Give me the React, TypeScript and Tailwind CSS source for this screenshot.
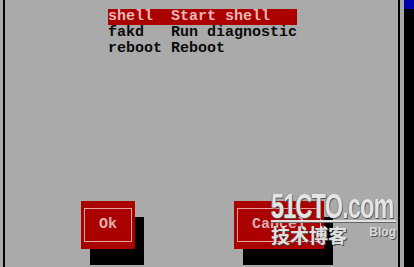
import React from 'react';

const items = [
  { tag: 'shell', label: 'Start shell', selected: true },
  { tag: 'fakd', label: 'Run diagnostic', selected: false },
  { tag: 'reboot', label: 'Reboot', selected: false },
];

const Button: React.FC<{ label: string; width: string }> = ({ label, width }) => (
  <div className={`${width} h-[48px] bg-[#aa0000] p-[3px] shadow-[9px_16px_0_0_#000]`}>
    <div className="flex h-[34px] mt-[4px] items-center justify-center border border-[#e8a4a4] text-[#dcb0b0]">
      {label}
    </div>
  </div>
);

export default function App() {
  return (
    <div
      className="relative flex h-[267px] w-[414px] overflow-hidden bg-[#aaaaaa] font-bold text-[15px] leading-[16px]"
      style={{ fontFamily: '"Liberation Mono", "DejaVu Sans Mono", monospace' }}
    >
      <div className="w-[3px] shrink-0" />
      <div className="w-[2px] shrink-0 bg-black" />
      <div className="flex flex-1 flex-col">
        <div className="pt-[9px] pl-[103px]">
          {items.map((it) => (
            <div
              key={it.tag}
              className={`flex h-[16px] w-[189px] whitespace-pre ${
                it.selected ? 'bg-[#aa0000] text-[#ecb8b8]' : 'text-[#0a0a0a]'
              }`}
            >
              <span className="w-[63px]">{it.tag}</span>
              <span>{it.label}</span>
            </div>
          ))}
        </div>
        <div className="mt-[144px] flex gap-[99px] pl-[76px]">
          <Button label="Ok" width="w-[54px]" />
          <Button label="Cancel" width="w-[90px]" />
        </div>
      </div>
      <div className="w-[2px] shrink-0 bg-black" />
      <div className="w-[4px] shrink-0" />
      <div className="flex w-[10px] shrink-0 flex-col bg-black">
        <div className="h-[9px] bg-[#0000aa]" />
      </div>

      {/* watermark */}
      <div
        className="absolute left-[271px] top-[193px] w-[125px]"
        style={{ fontFamily: '"Liberation Sans", Arial, sans-serif' }}
      >
        <div className="h-[27px] whitespace-nowrap">
          <span className="inline-block origin-top-left scale-x-[0.78] scale-y-[1.15] text-[30px] leading-[24px] font-bold tracking-[-1px] text-[#e4e4e4] [text-shadow:1px_1px_0_#555,-1px_0_0_#777]">
            51CTO.com
          </span>
        </div>
        <div className="h-[2px] w-[125px] bg-[#e0e0e0] shadow-[0_1px_0_#666]" />
        <div className="mt-[3px] flex items-start justify-between">
          <span
            className="text-[19px] leading-[20px] font-bold text-[#e0e0e0] [text-shadow:1px_1px_0_#444]"
            style={{ fontFamily: '"Noto Sans CJK SC", sans-serif' }}
          >
            技术博客
          </span>
          <span className="mt-[1px] text-[12px] leading-[12px] font-bold text-[#dcdcdc] [text-shadow:1px_1px_0_#555]">
            Blog
          </span>
        </div>
      </div>
    </div>
  );
}
